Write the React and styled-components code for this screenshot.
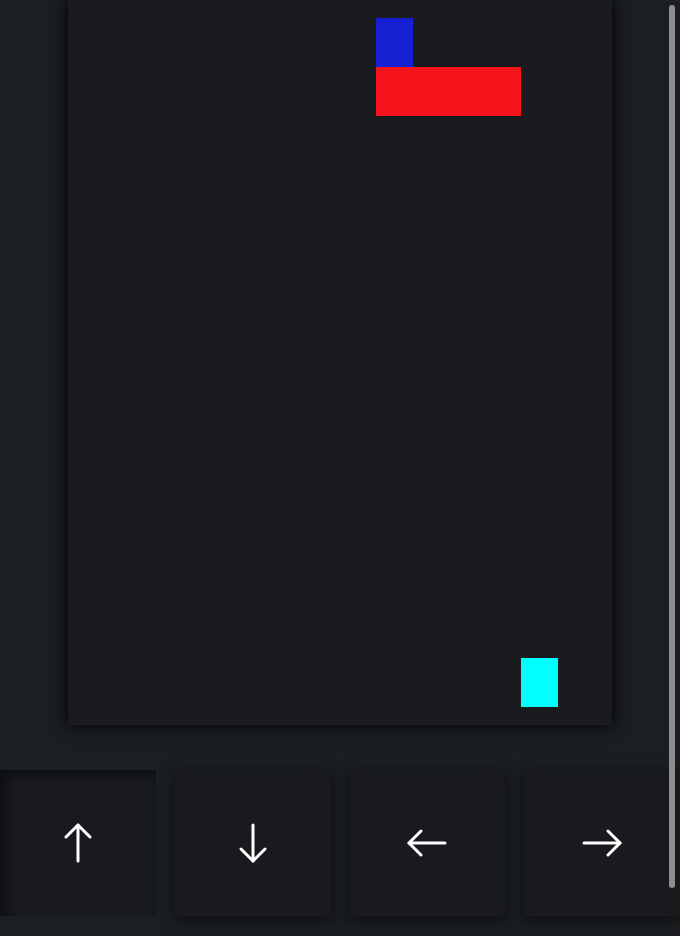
import React from 'react';
import styled, { createGlobalStyle } from 'styled-components';

const COLS = 14;
const ROWS = 14;

const pieces = [
  { id: 'b', color: '#1520d2', col: 9, row: 1, w: 1 },
  { id: 'r', color: '#f5141b', col: 9, row: 2, w: 4 },
  { id: 'c', color: '#00ffff', col: 13, row: 14, w: 1 },
];

const keys = [
  { id: 'up', rotate: 0, pressed: true },
  { id: 'down', rotate: 180 },
  { id: 'left', rotate: 270 },
  { id: 'right', rotate: 90 },
];

const GlobalStyle = createGlobalStyle`
  html, body {
    margin: 0;
    padding: 0;
    background: #1b1e22;
    overflow: hidden;
    font-family: "Liberation Sans", Arial, sans-serif;
  }
  * {
    box-sizing: border-box;
  }
`;

const Page = styled.div`
  display: flex;
  flex-direction: column;
  width: 680px;
  height: 936px;
`;

const Board = styled.div`
  display: grid;
  grid-template-columns: repeat(${COLS}, 1fr);
  grid-template-rows: repeat(${ROWS}, 1fr);
  margin-left: 68px;
  padding: 18px;
  width: 544px;
  height: 725px;
  background: #191b1f;
  box-shadow: 0 0 14px 1px rgba(0, 0, 0, 0.95);
`;

const Cell = styled.div`
  grid-column: ${({ col, w }) => `${col} / span ${w}`};
  grid-row: ${({ row }) => row};
  background: ${({ color }) => color};
`;

const Controls = styled.div`
  display: flex;
  gap: 19px;
  margin-top: 45px;
  height: 146px;
`;

const Key = styled.button`
  flex: 1;
  display: flex;
  justify-content: center;
  align-items: center;
  border: none;
  padding: 0;
  background: #181a1e;
  box-shadow: ${({ pressed }) =>
    pressed
      ? 'inset 7px 5px 10px rgba(0, 0, 0, 0.4)'
      : '0 4px 14px rgba(0, 0, 0, 0.55)'};
  cursor: pointer;

  svg {
    width: 40px;
    height: 40px;
  }
`;

const ScrollThumb = styled.div`
  position: fixed;
  top: 5px;
  right: 5px;
  width: 6px;
  height: 883px;
  border-radius: 3px;
  background: #8b8e91;
`;

const Arrow = ({ rotate }) => (
  <svg viewBox="0 0 40 40" style={{ transform: `rotate(${rotate}deg)` }}>
    <g
      fill="none"
      stroke="#fff"
      strokeWidth="3"
      strokeLinecap="round"
      strokeLinejoin="round"
    >
      <path d="M20 2V38" />
      <path d="M8 14L20 2L32 14" />
    </g>
  </svg>
);

const App = () => (
  <>
    <GlobalStyle />
    <Page>
      <Board>
        {pieces.map(p => (
          <Cell key={p.id} color={p.color} col={p.col} row={p.row} w={p.w} />
        ))}
      </Board>
      <Controls>
        {keys.map(k => (
          <Key key={k.id} pressed={k.pressed} aria-label={k.id}>
            <Arrow rotate={k.rotate} />
          </Key>
        ))}
      </Controls>
    </Page>
    <ScrollThumb />
  </>
);

export default App;
